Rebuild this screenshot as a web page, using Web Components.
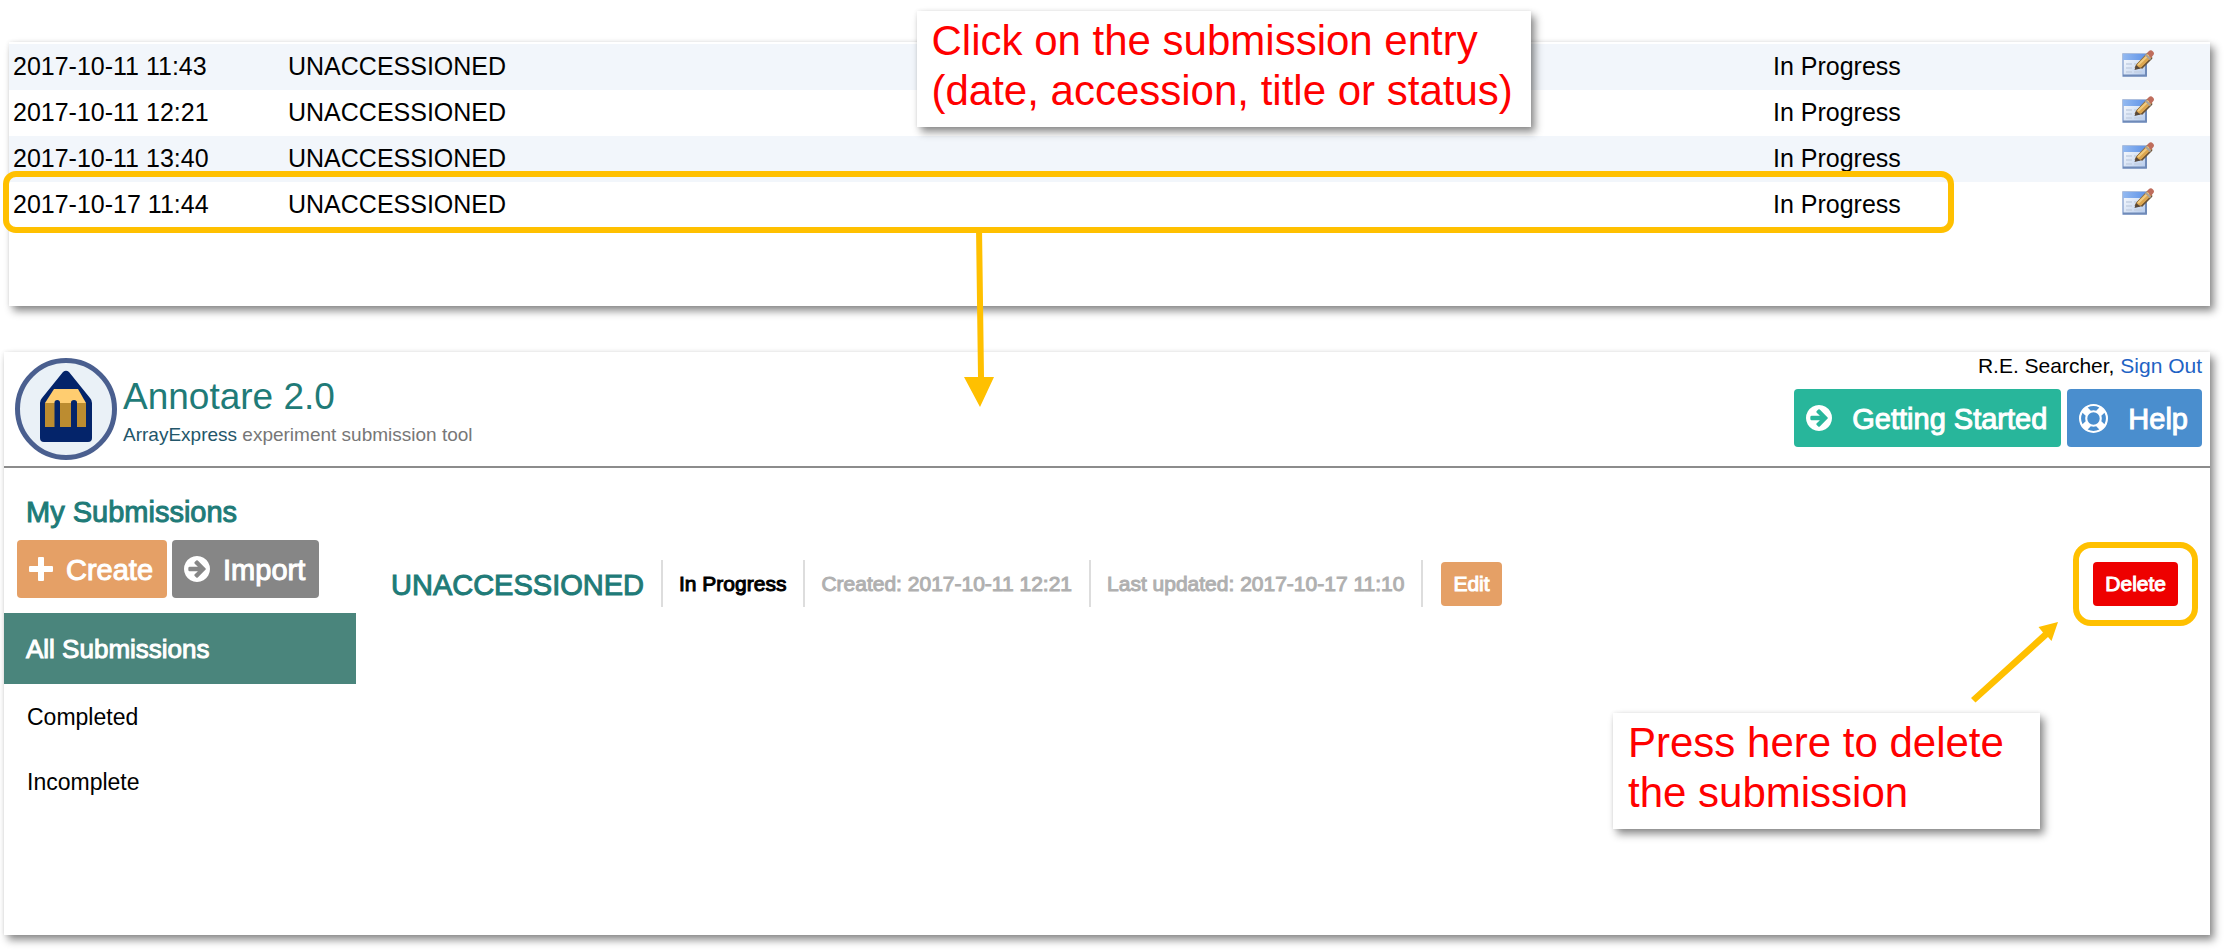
<!DOCTYPE html>
<html lang="en">
<head>
<meta charset="utf-8">
<title>Annotare 2.0 – deleting a submission</title>
<style>
  body { margin: 0; background: #fff; color: #000; font-family: "Liberation Sans", Arial, sans-serif; }
</style>
</head>
<body>
<help-figure></help-figure>

<script>
const define = (name, markup, setup) => {
  const template = document.createElement('template');
  template.innerHTML = markup;
  customElements.define(name, class extends HTMLElement {
    constructor() {
      super();
      this.attachShadow({ mode: 'open' }).append(template.content.cloneNode(true));
    }
    connectedCallback() { if (setup) setup(this, this.shadowRoot); }
  });
};

const ICONS = {
  plus: ['0 0 24 24', 'M9 1q0-1 1-1h4q1 0 1 1v8h8q1 0 1 1v4q0 1-1 1h-8v8q0 1-1 1h-4q-1 0-1-1v-8H1q-1 0-1-1v-4q0-1 1-1h8z'],
  arrow: ['128 128 1536 1536', 'M1413 896q0-27-18-45l-91-91-362-362q-18-18-45-18t-45 18l-91 91q-18 18-18 45t18 45l189 189h-502q-26 0-45 19t-19 45v128q0 26 19 45t45 19h502l-189 189q-19 19-19 45t19 45l91 91q18 18 45 18t45-18l362-362 91-91q18-18 18-45zm251 0q0 209-103 385.500t-279.500 279.500-385.500 103-385.500-103-279.500-279.500-103-385.500 103-385.500 279.500-279.500 385.500-103 385.500 103 279.500 279.500 103 385.500z'],
  ring: ['0 0 1792 1792', 'M896 0q182 0 348 71t286 191 191 286 71 348-71 348-191 286-286 191-348 71-348-71-286-191-191-286-71-348 71-348 191-286 286-191 348-71zm0 128q-190 0-361 90l194 194q82-28 167-28t167 28l194-194q-171-90-361-90zm-678 1129l194-194q-28-82-28-167t28-167l-194-194q-90 171-90 361t90 361zm678 407q190 0 361-90l-194-194q-82 28-167 28t-167-28l-194 194q171 90 361 90zm0-384q159 0 271.500-112.500t112.500-271.500-112.500-271.500-271.500-112.500-271.500 112.500-112.500 271.500 112.500 271.500 271.500 112.500zm484-217l194 194q90-171 90-361t-90-361l-194 194q28 82 28 167t-28 167z']
};

/* Filled button: large with an icon, or small with text only */
define('action-button', `
  <style>
    :host { display: inline-block; --fill: #888; }
    button { display: flex; align-items: center; gap: var(--gap, 13px); height: 58px; margin: 0; padding: 0 14px 0 12px;
      border: 0; border-radius: 4px; background: var(--fill); color: #fff; font: 29px/34px "Liberation Sans", Arial, sans-serif;
      -webkit-text-stroke: 1px currentColor; white-space: nowrap; cursor: pointer; }
    .label { padding-top: 2px; }
    svg { width: 26px; height: 26px; fill: #fff; flex: none; }
    :host([icon=plus]) svg { width: 24px; height: 24px; }
    :host([icon=ring]) svg { width: 29px; height: 29px; }
    :host([small]) button { height: 44px; padding: 0 12px; font-size: 21px; line-height: 26px; }
    :host([small]) .label { padding: 0; }
    :host([small]) svg { display: none; }
  </style>
  <button type="button"><svg aria-hidden="true"><path/></svg><span class="label"><slot></slot></span></button>`,
  (host, root) => {
    const icon = ICONS[host.getAttribute('icon')];
    if (!icon) return;
    root.querySelector('svg').setAttribute('viewBox', icon[0]);
    root.querySelector('path').setAttribute('d', icon[1]);
  });

define('paper-panel', `
  <style>
    :host { display: block; position: relative; background: #fff; box-shadow: 4px 5px 8px rgba(0,0,0,.45), 0 0 4px rgba(0,0,0,.08); }
  </style>
  <slot></slot>`);

define('note-callout', `
  <style>
    :host { display: block; position: absolute; box-sizing: border-box; padding: 5px 0 11px 15px; background: #fff; color: #f00;
      font-size: 42px; line-height: 50px; white-space: nowrap; box-shadow: 4px 5px 8px rgba(0,0,0,.45), 0 0 4px rgba(0,0,0,.08); }
    p { margin: 0; }
  </style>
  <p><slot></slot></p>`);

define('edit-icon', `
  <style>:host { display: block; } svg { display: block; width: 32px; height: 27px; }</style>
  <svg viewBox="0 0 32 27" aria-hidden="true">
    <defs>
      <linearGradient id="bar" x2="1"><stop stop-color="#93b9f0"/><stop offset="1" stop-color="#5f93e8"/></linearGradient>
      <linearGradient id="page" x2="1" y2="1"><stop stop-color="#fff"/><stop offset="1" stop-color="#b4caec"/></linearGradient>
    </defs>
    <rect x="1" y="4" width="23" height="22" fill="url(#page)" stroke="#93abd3" stroke-width="1.500"/>
    <rect x="1" y="4" width="23" height="6" fill="url(#bar)"/>
    <path d="M1 25.500h23V11" fill="none" stroke="#6f8ab8" stroke-width="2"/>
    <path d="M4 14h6M12 14h4M4 18h6M4 22h6M12 22h8" stroke="#c3d0e2" stroke-width="1.500"/>
    <path d="M13 18l2-4L25.500 3l4.500 4.500L19 18z" fill="#dba54f" stroke="#8d6b3c"/>
    <path d="M16 15L27 4.500" stroke="#f0cb80" stroke-width="2"/>
    <path d="M19.500 18.500L30 8" stroke="#6b5235" stroke-width="1.500"/>
    <path d="M12.500 20l1.500-5 4.500 3.500z" fill="#57483c"/>
    <path d="M25 3l2-2q2-1.500 4 .5t0 4l-2 2.500z" fill="#bf6d5c"/>
    <path d="M23.500 4.500l5 5" stroke="#a9a29c" stroke-width="2"/>
  </svg>`);

define('submission-table', `
  <style>
    :host { display: block; }
    table { width: 100%; border-collapse: collapse; table-layout: fixed; font-size: 25px; line-height: 28px; }
    tr { position: relative; height: 46px; }
    tr:nth-child(odd) { background: #f2f6fb; }
    td { padding: 0 0 2px 4px; text-align: left; white-space: nowrap; }
    .date { width: 275px; } .accession { width: 260px; } .status { width: 349px; } .edit { width: 92px; }
    button { display: block; margin: -5px 0 0; padding: 0; border: 0; background: none; cursor: pointer; }
    .mark { position: absolute; box-sizing: border-box; inset: -11px 256px -5px -6px; border: 6px solid #ffc000; border-radius: 13px; }
    .mark svg { position: absolute; left: 50%; top: 100%; width: 32px; height: 180px; margin-left: -16px; fill: #ffc000; }
  </style>
  <table aria-label="Submissions">
    <colgroup><col class="date"><col class="accession"><col><col class="status"><col class="edit"></colgroup>
    <tbody></tbody>
  </table>`,
  (host, root) => {
    const dates = ['2017-10-11 11:43', '2017-10-11 12:21', '2017-10-11 13:40', '2017-10-17 11:44'];
    root.querySelector('tbody').innerHTML = dates.map((date, i) => `
      <tr><td>${date}${i === 3 ? `<div class="mark"><svg viewBox="0 0 32 180" aria-hidden="true"><path d="M13 0h6l2 150h10l-14 30-16-30h14z"/></svg></div>` : ''}</td>
      <td>UNACCESSIONED</td><td></td><td>In Progress</td>
      <td><button type="button" aria-label="Edit"><edit-icon></edit-icon></button></td></tr>`).join('');
  });

define('app-logo', `
  <style>:host { display: block; } svg { display: block; width: 102px; height: 102px; }</style>
  <svg viewBox="0 0 102 102" aria-hidden="true">
    <circle cx="51" cy="51" r="48.500" fill="#eaf1f7" stroke="#4a5f8f" stroke-width="5"/>
    <path d="M48 14q3-2.500 6 0l21 26q2 2 2 5v35q0 4-4 4H29q-4 0-4-4V45q0-3 2-5z" fill="#04246a"/>
    <path d="M39 31h24l8 14H30z" fill="#ffcd70"/>
    <path d="M30 45h41v24H30z" fill="#bc8c30"/>
    <path d="M39.500 70V44.500q0-2.500 2.750-2.500t2.750 2.500V70zM56 70V44.500q0-2.500 3-2.500t3 2.500V70z" fill="#04246a"/>
  </svg>`);

define('app-header', `
  <style>
    :host { display: flex; align-items: flex-start; justify-content: space-between; box-sizing: border-box; min-height: 116px;
      padding: 0 8px 0 11px; border-bottom: 2px solid #8c8c8c; }
    .brand { display: flex; gap: 6px; padding-top: 6px; }
    .names { padding-top: 17px; }
    h1 { margin: 0; color: #1f7b78; font-size: 37px; font-weight: 400; line-height: 44px; }
    p { margin: 0; color: #777; font-size: 19px; line-height: 32px; }
    .names b { color: #23566a; font-weight: 400; }
    .tools { display: grid; justify-items: end; gap: 10px; padding-top: 1px; }
    .user { color: #000; font-size: 21px; line-height: 26px; }
    a { color: #1f63c4; text-decoration: none; }
    .buttons { display: flex; gap: 6px; }
    action-button { --gap: 20px; }
    .start { --fill: #28b69b; } .help { --fill: #4a8ece; }
  </style>
  <div class="brand"><app-logo></app-logo>
    <div class="names"><h1>Annotare 2.0</h1><p><b>ArrayExpress</b> experiment submission tool</p></div></div>
  <div class="tools">
    <p class="user">R.E. Searcher, <a href="#signout">Sign Out</a></p>
    <div class="buttons"><action-button class="start" icon="arrow">Getting Started</action-button><action-button class="help" icon="ring">Help</action-button></div>
  </div>`);

define('app-sidebar', `
  <style>
    :host { display: block; padding-top: 27px; }
    h2 { margin: 0 0 11px 22px; color: #1f7b78; font-size: 29px; font-weight: 400; line-height: 34px; -webkit-text-stroke: 1px currentColor; }
    .buttons { display: flex; gap: 5px; margin: 0 0 15px 13px; }
    .create { --fill: #e5a066; } .import { --fill: #868686; }
    a { display: flex; align-items: center; box-sizing: border-box; height: 65px; padding-left: 23px; color: #000; font-size: 23px; line-height: 28px; text-decoration: none; }
    a[aria-current] { height: 71px; padding-left: 22px; background: #4a857c; color: #fff; font-size: 26px; -webkit-text-stroke: 1px currentColor; }
  </style>
  <h2>My Submissions</h2>
  <div class="buttons"><action-button class="create" icon="plus">Create</action-button><action-button class="import" icon="arrow">Import</action-button></div>
  <nav><a href="#all" aria-current="page">All Submissions</a><a href="#completed">Completed</a><a href="#incomplete">Incomplete</a></nav>`);

define('submission-detail', `
  <style>
    :host { display: flex; align-items: center; align-self: start; height: 47px; padding: 92px 32px 0 35px; font-size: 21px; line-height: 26px; white-space: nowrap; }
    h3, span { display: flex; align-items: center; box-sizing: border-box; height: 47px; margin: 0; padding: 0 17px 0 16px; border-right: 2px solid #ddd; }
    h3 { padding: 3px 17px 0 0; color: #1f7b78; font-size: 29px; font-weight: 400; line-height: 34px; }
    h3, span { -webkit-text-stroke: 1px currentColor; }
    span.soft { color: #b0b0b0; }
    .edit { --fill: #e5a066; margin-left: 18px; }
    .delete { --fill: #e00; display: block; }
    .target { position: relative; margin-left: auto; }
    .mark { position: absolute; inset: -20px; border: 6px solid #ffc000; border-radius: 18px; pointer-events: none; }
    .target svg { position: absolute; right: 100%; top: 100%; width: 92px; height: 86px; margin: 14px 34px 0 0; fill: #ffc000; }
  </style>
  <h3>UNACCESSIONED</h3><span>In Progress</span><span class="soft">Created: 2017-10-11 12:21</span><span class="soft">Last updated: 2017-10-17 11:10</span>
  <action-button class="edit" small>Edit</action-button>
  <div class="target"><action-button class="delete" small>Delete</action-button><div class="mark"></div>
    <svg viewBox="0 0 92 86" aria-hidden="true"><path d="M91 2L71.500 7L76 12.500L4 78L8.500 82.500L81 17L84.500 21z"/></svg>
  </div>`);

define('help-figure', `
  <style>
    :host { display: block; padding: 42px 15px 15px 4px; }
    .list { margin-left: 5px; padding: 2px 0 78px; z-index: 1; }
    .app { margin-top: 46px; min-height: 583px; }
    .body { display: grid; grid-template-columns: 352px 1fr; }
    .first { left: calc(50% - 193px); top: -31px; width: 614px; }
    .second { right: 170px; top: 361px; width: 427px; }
  </style>
  <paper-panel class="list"><submission-table></submission-table>
    <note-callout class="first">Click on the submission entry<br>(date, accession, title or status)</note-callout></paper-panel>
  <paper-panel class="app"><app-header></app-header>
    <div class="body"><app-sidebar></app-sidebar><submission-detail></submission-detail></div>
    <note-callout class="second">Press here to delete<br>the submission</note-callout></paper-panel>`);
</script>
</body>
</html>
